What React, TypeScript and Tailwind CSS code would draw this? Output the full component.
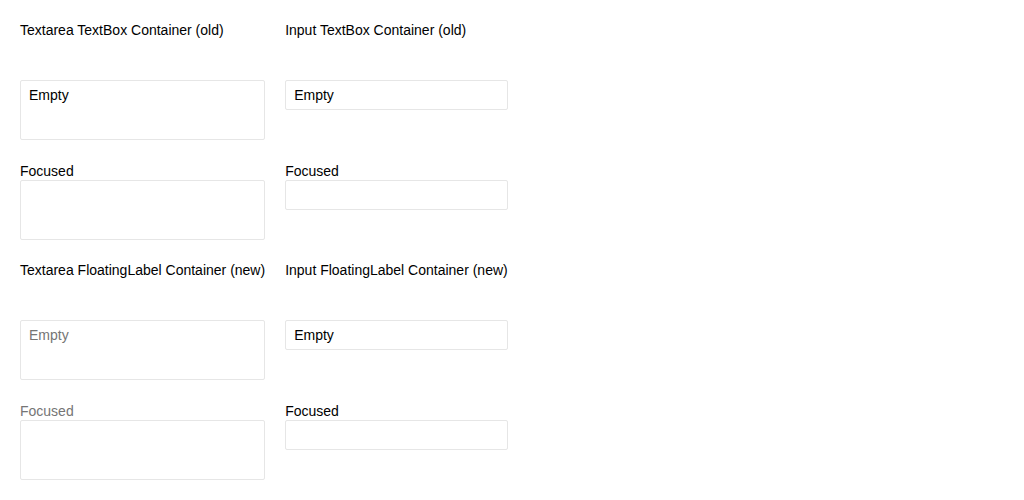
const font = { fontFamily: '"Liberation Sans", Arial, sans-serif' };

function Box({ tall, text, muted }: { tall?: boolean; text?: string; muted?: boolean }) {
  return (
    <div
      className={`rounded-[2px] border border-[#e6e6e6] bg-white px-2 text-sm leading-5 ${
        tall ? "h-[60px] py-[4px]" : "h-[30px] py-[4px]"
      } ${muted ? "text-[#757575]" : "text-black"}`}
    >
      {text}
    </div>
  );
}

function Field({ label, muted, children }: { label?: string; muted?: boolean; children: React.ReactNode }) {
  return (
    <div className="flex flex-col">
      <div className={`h-5 text-sm leading-[22px] ${muted ? "text-[#757575]" : "text-black"}`}>{label}</div>
      {children}
    </div>
  );
}

export default function App() {
  return (
    <div className="min-h-screen bg-white p-5" style={font}>
      <div className="grid w-fit grid-cols-[auto_auto] gap-x-5 gap-y-5 text-sm leading-5 text-black">
        <div>Textarea TextBox Container (old)</div>
        <div>Input TextBox Container (old)</div>

        <Field>
          <Box tall text="Empty" />
        </Field>
        <Field>
          <Box text="Empty" />
        </Field>

        <Field label="Focused">
          <Box tall />
        </Field>
        <Field label="Focused">
          <Box />
        </Field>

        <div>Textarea FloatingLabel Container (new)</div>
        <div>Input FloatingLabel Container (new)</div>

        <Field>
          <Box tall text="Empty" muted />
        </Field>
        <Field>
          <Box text="Empty" />
        </Field>

        <Field label="Focused" muted>
          <Box tall />
        </Field>
        <Field label="Focused">
          <Box />
        </Field>
      </div>
    </div>
  );
}
